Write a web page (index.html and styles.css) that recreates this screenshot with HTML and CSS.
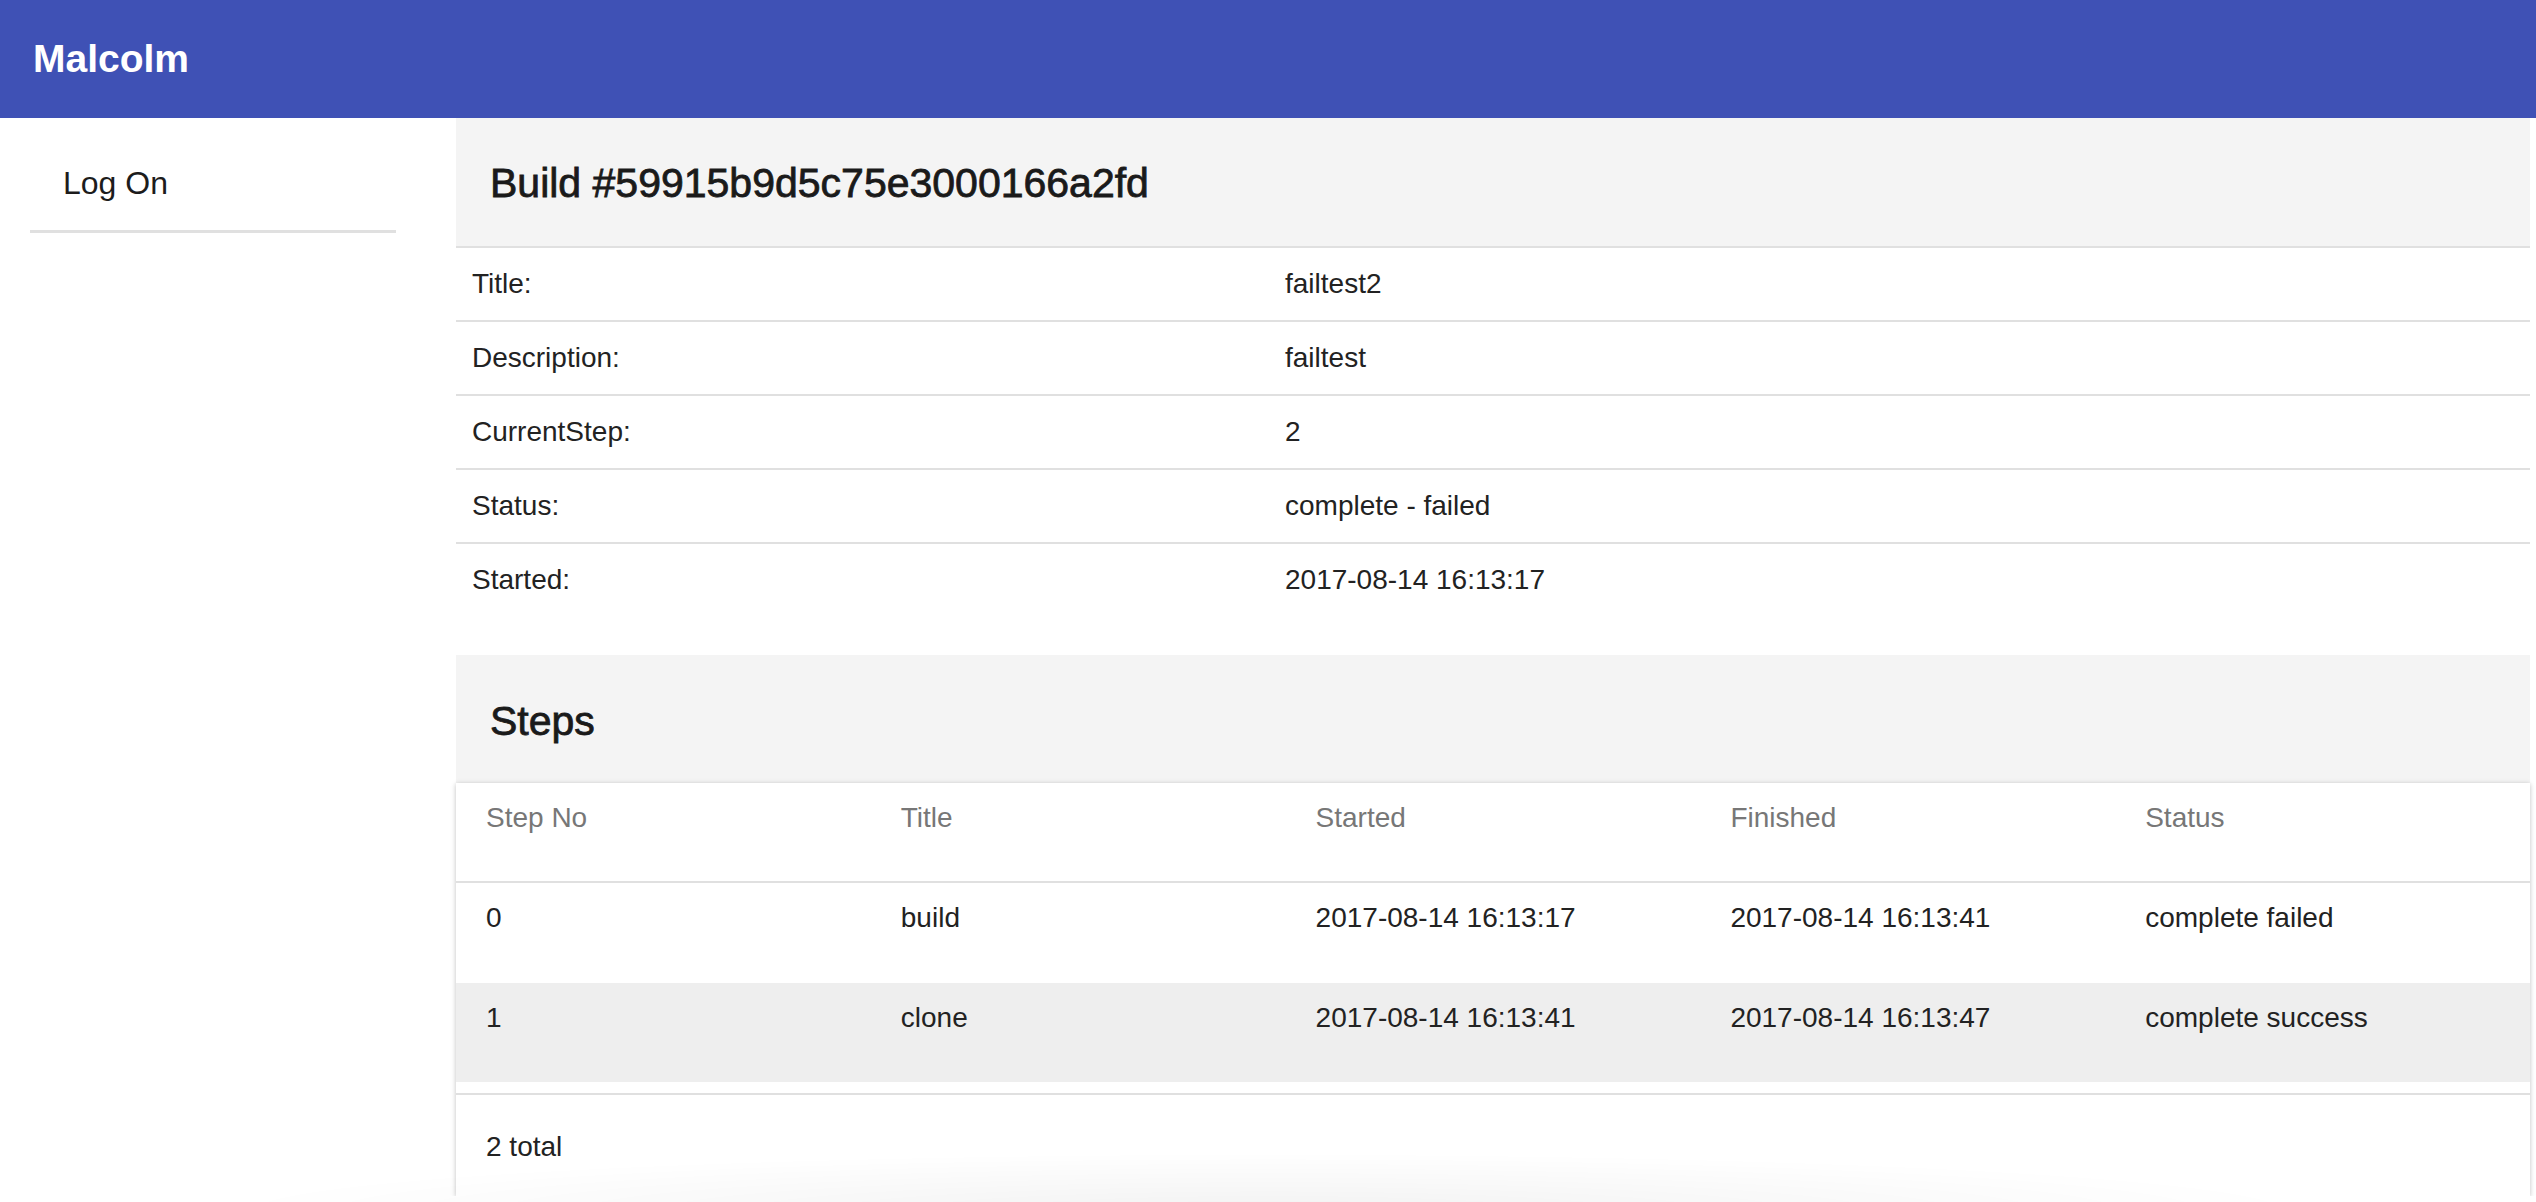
FILE: index.html
```html
<!DOCTYPE html>
<html lang="en">
<head>
<meta charset="utf-8">
<title>Malcolm</title>
<link rel="stylesheet" href="styles.css">
</head>
<body>
<header class="appbar">
  <h1 class="brand">Malcolm</h1>
</header>
<div class="layout">
  <aside class="sidebar">
    <nav class="nav">
      <div class="nav-item">Log On</div>
    </nav>
  </aside>
  <main class="main">
    <section class="build">
      <div class="block-title">Build #59915b9d5c75e3000166a2fd</div>
      <div class="details">
        <div class="drow"><div class="dlabel">Title:</div><div class="dvalue">failtest2</div></div>
        <div class="drow"><div class="dlabel">Description:</div><div class="dvalue">failtest</div></div>
        <div class="drow"><div class="dlabel">CurrentStep:</div><div class="dvalue">2</div></div>
        <div class="drow"><div class="dlabel">Status:</div><div class="dvalue">complete - failed</div></div>
        <div class="drow"><div class="dlabel">Started:</div><div class="dvalue">2017-08-14 16:13:17</div></div>
      </div>
    </section>
    <section class="steps">
      <div class="block-title">Steps</div>
      <div class="card">
        <div class="trow thead">
          <div class="cell">Step No</div>
          <div class="cell">Title</div>
          <div class="cell">Started</div>
          <div class="cell">Finished</div>
          <div class="cell">Status</div>
        </div>
        <div class="trow">
          <div class="cell">0</div>
          <div class="cell">build</div>
          <div class="cell">2017-08-14 16:13:17</div>
          <div class="cell">2017-08-14 16:13:41</div>
          <div class="cell">complete failed</div>
        </div>
        <div class="trow striped">
          <div class="cell">1</div>
          <div class="cell">clone</div>
          <div class="cell">2017-08-14 16:13:41</div>
          <div class="cell">2017-08-14 16:13:47</div>
          <div class="cell">complete success</div>
        </div>
        <div class="tfoot">2 total</div>
      </div>
    </section>
  </main>
</div>
<div class="bottom-glow"></div>
</body>
</html>
```

FILE: styles.css
```css
* { box-sizing: border-box; }

html, body {
  margin: 0;
  padding: 0;
  background: #ffffff;
  font-family: "Liberation Sans", Arial, Helvetica, sans-serif;
  color: #212121;
}

.appbar {
  height: 118px;
  background: #3f51b5;
  padding: 36px 33px 0;
}

.brand {
  margin: 0;
  font-size: 39px;
  line-height: 45px;
  font-weight: bold;
  color: #ffffff;
}

.layout {
  display: flex;
  align-items: flex-start;
}

.sidebar {
  width: 456px;
  flex: none;
  padding: 0 60px 0 30px;
}

.nav-item {
  padding: 47px 0 28px 33px;
  font-size: 32px;
  line-height: 37px;
  color: #1c1c1c;
  border-bottom: 3px solid #e0e0e0;
}

.main {
  flex: 1;
  margin-right: 6px;
}

.block-title {
  background: #f4f4f4;
  height: 128px;
  padding: 42px 34px 0;
  font-size: 41px;
  line-height: 47px;
  color: #1a1a1a;
  -webkit-text-stroke: 0.8px #1a1a1a;
}

.build {
  margin-bottom: 39px;
}

.details .drow {
  display: grid;
  grid-template-columns: 813px 1fr;
  height: 74px;
  border-top: 2px solid #e0e0e0;
  align-items: center;
  font-size: 28px;
  line-height: 32px;
  color: #222222;
}

.dlabel, .dvalue {
  padding-left: 16px;
}

.steps .block-title {
  padding-top: 43px;
}

.card {
  background: #ffffff;
  box-shadow: 0 1px 6px rgba(0, 0, 0, 0.14), 0 1px 4px rgba(0, 0, 0, 0.12);
}

.trow {
  display: grid;
  grid-template-columns: repeat(5, 1fr);
  height: 100px;
  font-size: 28px;
  line-height: 32px;
  color: #222222;
}

.trow .cell {
  padding: 19px 30px 0;
  white-space: nowrap;
}

.trow.thead {
  height: 100px;
  color: #777777;
  border-bottom: 2px solid #e0e0e0;
}

.trow.striped {
  background: #eeeeee;
  height: 99px;
  margin-bottom: 11px;
}

.tfoot {
  border-top: 2px solid #e0e0e0;
  height: 103px;
  padding: 36px 30px 0;
  font-size: 28px;
  line-height: 32px;
  color: #222222;
}

.bottom-glow {
  position: fixed;
  left: 200px;
  right: 200px;
  bottom: -70px;
  height: 120px;
  background: radial-gradient(ellipse at center, rgba(0, 0, 0, 0.05) 0%, rgba(0, 0, 0, 0) 70%);
  pointer-events: none;
}
```
